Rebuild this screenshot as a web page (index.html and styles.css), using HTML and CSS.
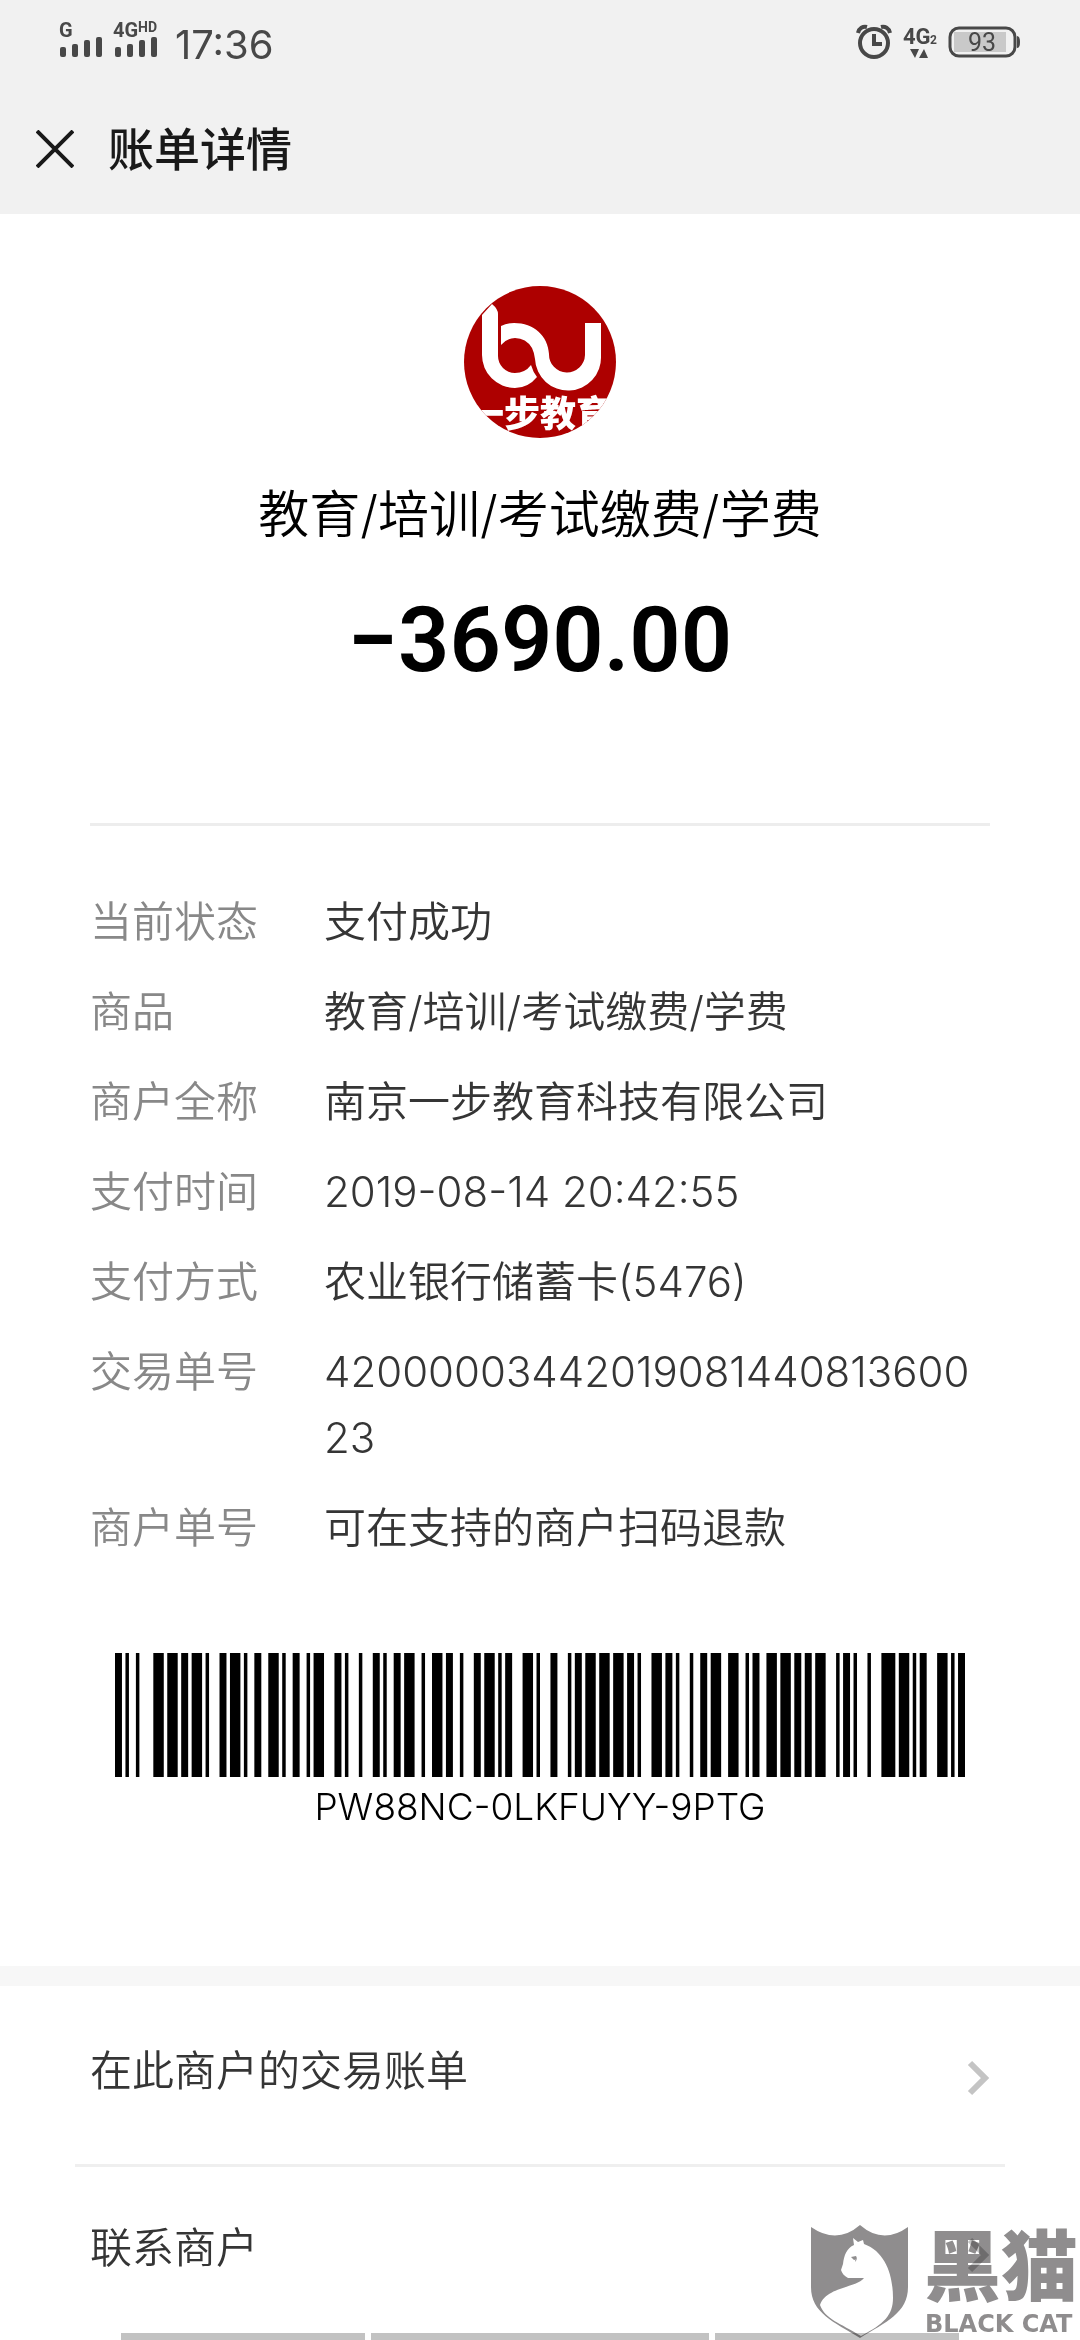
FILE: index.html
```html
<!DOCTYPE html>
<html lang="zh-CN">
<head>
  <meta charset="UTF-8">
  <meta name="viewport" content="width=device-width, initial-scale=1.0">
  <title>账单详情</title>
  <link rel="stylesheet" href="styles.css">
</head>
<body>
  <!-- Top bar -->
  <header class="top">
    <div class="status">
      <div class="status-left">
        <svg class="signals" width="102" height="44" viewBox="0 0 102 44" aria-hidden="true">
          <g fill="#484848">
            <rect x="1" y="27" width="6" height="10" rx="2"/>
            <rect x="13" y="24" width="6" height="13" rx="2"/>
            <rect x="25" y="20" width="6" height="17" rx="2"/>
            <rect x="37" y="17" width="6" height="20" rx="2"/>
            <rect x="56" y="27" width="6" height="10" rx="2"/>
            <rect x="68" y="24" width="6" height="13" rx="2"/>
            <rect x="80" y="20" width="6" height="17" rx="2"/>
            <rect x="92" y="17" width="6" height="20" rx="2"/>
          </g>
          <text class="net" x="0" y="17" font-size="20">G</text>
          <text class="net" x="54" y="17" font-size="20">4G</text>
          <text class="net" x="79" y="12" font-size="14">HD</text>
        </svg>
        <time class="clock">17:36</time>
      </div>
      <div class="status-right">
        <svg width="36" height="36" viewBox="0 0 36 36" fill="none" stroke="#484848" aria-hidden="true">
          <circle cx="18" cy="19" r="14" stroke-width="4"/>
          <path d="M18 10v10h8" stroke-width="4"/>
          <path d="M2 9C3 4 7 2 11 3M34 9C33 4 29 2 25 3" stroke-width="4"/>
        </svg>
        <svg width="34" height="36" viewBox="0 0 34 36" aria-hidden="true">
          <text class="net" x="0" y="20" font-size="22">4G</text>
          <text class="net" x="27" y="20" font-size="12">2</text>
          <path d="M7 25h9l-4 9zM16 34h9l-4-9z" fill="#484848"/>
        </svg>
        <svg width="73" height="32" viewBox="0 0 73 32" aria-hidden="true">
          <rect x="6" y="6" width="52" height="20" fill="#c9c9c9"/>
          <rect x="2" y="2" width="65" height="28" rx="9" fill="none" stroke="#484848" stroke-width="3"/>
          <path d="M69 10q3 0 3 6t-3 6z" fill="#484848"/>
          <text class="battery" x="34" y="25" font-size="25" text-anchor="middle">93</text>
        </svg>
      </div>
    </div>
    <div class="nav">
      <button class="close" aria-label="关闭">
        <svg width="38" height="38" viewBox="0 0 38 38" stroke="#191919" stroke-width="4"><path d="M1 1l36 36M37 1L1 37"/></svg>
      </button>
      <h1 class="nav-title">账单详情</h1>
    </div>
  </header>

  <main>
    <!-- Merchant and amount -->
    <section class="summary">
      <svg class="logo" viewBox="0 0 154 154" role="img" aria-label="一步教育">
        <clipPath id="round"><circle cx="77" cy="77" r="76"/></clipPath>
        <circle cx="77" cy="77" r="76" fill="#ad0000"/>
        <path d="M19 30L29 19q6 5 6 10v42a17 17 0 0 0 17 17q10 0 16-8 2 7 6 12-9 11-22 11a33 33 0 0 1-33-33z" fill="#fff"/>
        <g clip-path="url(#round)">
          <path d="M38 41q6-3 13-3c20 0 34 13 35 31a18 18 0 0 0 36 1V38h16v33a33 33 0 0 1-66 3q-1-7-3-11-6-10-17-10-8 0-14 7z" fill="#fff"/>
          <text class="logo-text" x="5" y="142" font-size="36">一步教育</text>
        </g>
      </svg>
      <p class="merchant">教育/培训/考试缴费/学费</p>
      <p class="amount">−3690.00</p>
    </section>

    <!-- Bill fields -->
    <dl class="details">
      <div class="row"><dt>当前状态</dt><dd>支付成功</dd></div>
      <div class="row"><dt>商品</dt><dd>教育/培训/考试缴费/学费</dd></div>
      <div class="row"><dt>商户全称</dt><dd>南京一步教育科技有限公司</dd></div>
      <div class="row"><dt>支付时间</dt><dd>2019-08-14 20:42:55</dd></div>
      <div class="row"><dt>支付方式</dt><dd>农业银行储蓄卡(5476)</dd></div>
      <div class="row"><dt>交易单号</dt><dd>4200000344201908144081360023</dd></div>
      <div class="row"><dt>商户单号</dt><dd>可在支持的商户扫码退款</dd></div>
    </dl>

    <figure class="code">
      <svg class="barcode" viewBox="0 0 244 1" preserveAspectRatio="none" aria-hidden="true"><path id="bars"/></svg>
      <figcaption>PW88NC-0LKFUYY-9PTG</figcaption>
    </figure>

    <!-- Links -->
    <nav class="links">
      <a class="link" href="#">在此商户的交易账单
        <svg class="arrow" width="24" height="36" viewBox="0 0 24 36"><path d="M4 3l15 15L4 33"/></svg>
      </a>
      <a class="link" href="#">联系商户
        <svg class="arrow" width="24" height="36" viewBox="0 0 24 36"><path d="M4 3l15 15L4 33"/></svg>
      </a>
    </nav>
  </main>

  <div class="tabs"><span></span><span class="wide"></span><span></span></div>

  <svg class="watermark" width="270" height="116" viewBox="0 0 270 116" role="img" aria-label="黑猫 BLACK CAT">
    <path d="M1 3q26 18 49-2 23 20 48 2v60c0 26-22 35-48 51C24 98 1 89 1 63z" fill="#8f8d8e"/>
    <path d="M43 14l5 4 5-2 1 4c22 8 29 32 29 54 0 17-9 26-32 38C30 99 15 95 10 81c6-18 36-17 44-27H38c-4-2-6-5-7-8l2-6c1-9 4-16 11-19z" fill="#fff"/>
    <path d="M41 33l5-1q0 4-2 4zM46 32q2 3-1 6" fill="#8f8d8e"/>
    <text class="wm-cn" x="114" y="71" font-size="77">黑猫</text>
    <text class="wm-en" x="115" y="108" font-size="24">BLACK CAT</text>
  </svg>

  <script>
    // Code 128 B: bar and space widths of each symbol
    const symbols = {
      '-': '122132', '0': '123122', '8': '311222', '9': '321122',
      C: '131321', F: '132311', G: '211313', K: '112331', L: '132131',
      N: '113321', P: '313121', T: '213311', U: '213131', W: '311321', Y: '312113'
    };
    const text = document.querySelector('figcaption').textContent;
    const widths = '211214' + [...text].map(c => symbols[c]).join('') + '413111' + '2331112';

    let x = 0;
    let d = '';
    [...widths].forEach((w, i) => {
      if (i % 2 === 0) d += `M${x} 0h${w}v1h-${w}z`;
      x += Number(w);
    });
    document.getElementById('bars').setAttribute('d', d);
  </script>
</body>
</html>
```
FILE: styles.css
```css
* {
  box-sizing: border-box;
}

body {
  margin: 0;
  min-height: 100vh;
  display: flex;
  flex-direction: column;
  position: relative;
  overflow-x: hidden;
  background: #fff;
  color: #353535;
  font-family: Inter, "Noto Sans CJK SC", sans-serif;
  font-size: 42px;
  font-weight: 350;
}

h1, p, dl, dd, figure {
  margin: 0;
}

/* top bar */
.top {
  background: #f1f1f1;
}

.status {
  display: flex;
  justify-content: space-between;
  align-items: center;
  height: 84px;
  padding: 0 59px;
}

.status-left,
.status-right {
  display: flex;
  align-items: center;
}

.status-left {
  gap: 14px;
}

.status-right {
  gap: 11px;
}

.signals {
  overflow: visible;
}

.clock {
  margin-top: 6px;
  color: #484848;
  font-size: 40px;
  font-weight: 400;
  line-height: 48px;
}

.net {
  font-family: Roboto, sans-serif;
  font-weight: 700;
  fill: #484848;
}

.battery {
  font-family: Roboto, sans-serif;
  font-weight: 400;
  fill: #484848;
}

.nav {
  display: flex;
  align-items: center;
  gap: 34px;
  height: 130px;
  padding: 0 36px;
}

.close {
  display: flex;
  padding: 0;
  border: 0;
  background: none;
  cursor: pointer;
}

.nav-title {
  color: #191919;
  font-size: 46px;
  font-weight: 500;
  line-height: 66px;
}

/* merchant and amount */
.summary {
  display: flex;
  flex-direction: column;
  align-items: center;
  margin: 0 90px;
  padding: 71px 0 132px;
  border-bottom: 3px solid #ededed;
  color: #000;
}

.logo {
  width: 154px;
  height: 154px;
}

.logo-text {
  font-family: "Noto Sans CJK SC", sans-serif;
  font-weight: 900;
  fill: #fff;
}

.merchant {
  margin-top: 40px;
  font-size: 51px;
  line-height: 72px;
}

.amount {
  margin-top: 40px;
  font-family: Roboto, sans-serif;
  font-size: 90px;
  font-weight: 600;
  line-height: 100px;
}

/* bill fields */
.details {
  display: flex;
  flex-direction: column;
  gap: 24px;
  padding: 63px 90px 0;
  line-height: 66px;
}

.row {
  display: flex;
}

dt {
  flex: none;
  width: 234px;
  color: #888;
}

dd {
  flex: 1;
  min-width: 0;
  word-break: break-all;
}

/* barcode */
.code {
  padding: 92px 115px 135px;
  color: #000;
  text-align: center;
}

.barcode {
  display: block;
  width: 100%;
  height: 124px;
}

figcaption {
  margin-top: 6px;
  font-size: 37px;
  line-height: 48px;
}

/* links */
.links {
  padding: 0 75px;
  border-top: 20px solid #f7f7f7;
}

.link {
  display: flex;
  justify-content: space-between;
  align-items: center;
  padding: 52px 15px 60px;
  color: inherit;
  line-height: 66px;
  text-decoration: none;
}

.link + .link {
  padding: 48px 15px;
  border-top: 3px solid #efefef;
}

.arrow {
  margin-top: 14px;
  fill: none;
  stroke: #c4c4c4;
  stroke-width: 6;
}

/* bottom bar */
.tabs {
  position: absolute;
  left: 121px;
  right: 121px;
  bottom: 0;
  display: flex;
  gap: 6px;
  height: 7px;
}

.tabs span {
  flex: 244;
  background: #c2c2c2;
}

.tabs .wide {
  flex: 338;
}

.watermark {
  position: absolute;
  right: 0;
  bottom: 0;
  overflow: visible;
  mix-blend-mode: multiply;
}

.wm-cn {
  font-family: "Noto Sans CJK SC", sans-serif;
  font-weight: 900;
  fill: #8f8d8e;
}

.wm-en {
  font-family: "DejaVu Sans", sans-serif;
  font-weight: 700;
  fill: #8f8d8e;
}
```
